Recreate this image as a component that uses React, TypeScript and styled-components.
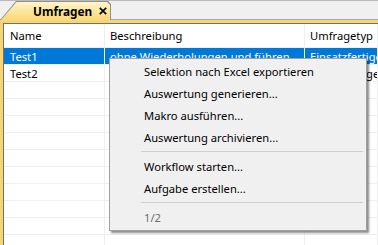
import React from "react";
import styled, { createGlobalStyle } from "styled-components";

const Global = createGlobalStyle`
  html, body { margin: 0; padding: 0; background: #f0f0f0; }
  body { width: 378px; height: 245px; overflow: hidden; font-family: "Noto Sans", "Open Sans", sans-serif; }
`;

const Window = styled.div`
  position: relative;
  width: 378px;
  height: 245px;
  display: flex;
  flex-direction: column;
  background: #f0f0f0;
  overflow: hidden;
`;

const TabStrip = styled.div`
  height: 22px;
  display: flex;
  align-items: flex-end;
  border-top: 1px solid #b9b9b9;
  box-sizing: border-box;
  background: #f0f0f0;
  border-bottom: 1px solid #a8a8a8;
`;

const TabOuter = styled.div`
  width: 111px;
  height: 19px;
  margin-bottom: -1px;
  background: #8f8f8f;
  clip-path: polygon(0 100%, 16px 0, 108px 0, 111px 3px, 111px 100%);
  display: flex;
`;

const TabInner = styled.div`
  flex: 1;
  margin: 1px 1px 0 1px;
  background: linear-gradient(#fff6cf, #fde7a0 45%, #fbd97a);
  clip-path: polygon(0 100%, 15.5px 0, 106px 0, 109px 3px, 109px 100%);
  display: flex;
  align-items: center;
  padding-left: 32px;
  gap: 7px;
`;

const TabLabel = styled.span`
  font-family: "Noto Sans", sans-serif;
  font-weight: 700;
  font-size: 11.8px;
  color: #000;
`;

const Frame = styled.div`
  flex: 1;
  display: flex;
  border-top: 3px solid #f8d56f;
  border-left: 3px solid #f8d56f;
  background: #f8d56f;
`;

const List = styled.div`
  flex: 1;
  background: #fff;
  border-top: 1px solid #6f6f84;
  border-left: 1px solid #6f6f84;
  display: flex;
  flex-direction: column;
  font-family: "Noto Sans", sans-serif;
  font-size: 11.2px;
`;

const GridRow = styled.div<{ $h: number; $selected?: boolean }>`
  display: grid;
  grid-template-columns: 101px 200px 1fr;
  height: ${(p) => p.$h}px;
  box-sizing: border-box;
  border-bottom: 1px solid #efefef;
  background: ${(p) => (p.$selected ? "#0078d7" : "#fff")};
  color: ${(p) => (p.$selected ? "#fff" : "#000")};
`;

const Cell = styled.div<{ $pad?: number }>`
  display: flex;
  align-items: center;
  padding-left: ${(p) => p.$pad ?? 6}px;
  border-right: 1px solid #efefef;
  white-space: nowrap;
  overflow: hidden;
  box-sizing: border-box;
`;

const Menu = styled.div`
  position: absolute;
  left: 109px;
  top: 58px;
  width: 258px;
  height: 173px;
  box-sizing: border-box;
  background: #f0f0f0;
  border: 1px solid #a0a0a0;
  box-shadow: 2px 2px 2px rgba(0, 0, 0, 0.45);
  padding: 2px 1px 2px 1px;
  display: flex;
  flex-direction: column;
  font-family: "Noto Sans", sans-serif;
  font-size: 11.2px;
`;

const Item = styled.div<{ $disabled?: boolean }>`
  height: 22px;
  display: flex;
  align-items: center;
  padding-left: 33px;
  color: ${(p) => (p.$disabled ? "#6d6d6d" : "#000")};
  white-space: nowrap;
`;

const Separator = styled.div`
  height: 7px;
  display: flex;
  align-items: center;
  padding: 0 2px 0 30px;
  &::after {
    content: "";
    flex: 1;
    height: 1px;
    background: #d0d0d0;
  }
`;

const CloseIcon = () => (
  <svg width="8" height="8" viewBox="0 0 8 8">
    <path d="M0.8 0.8 L7.2 7.2 M7.2 0.8 L0.8 7.2" stroke="#000" strokeWidth="1.7" />
  </svg>
);

const rows = [
  { name: "Test1", desc: "ohne Wiederholungen und führen", type: "Einsatzfertige", selected: true },
  { name: "Test2", desc: "mit Wiederholung", type: "Regelmäßige" },
  ...Array.from({ length: 10 }, () => ({ name: "", desc: "", type: "" })),
];

export default function App() {
  return (
    <Window>
      <Global />
      <TabStrip>
        <TabOuter>
          <TabInner>
            <TabLabel>Umfragen</TabLabel>
            <CloseIcon />
          </TabInner>
        </TabOuter>
      </TabStrip>
      <Frame>
        <List>
          <GridRow $h={24}>
            <Cell $pad={6}>Name</Cell>
            <Cell $pad={5}>Beschreibung</Cell>
            <Cell $pad={5}>Umfragetyp</Cell>
          </GridRow>
          {rows.map((r, i) => (
            <GridRow key={i} $h={17} $selected={r.selected}>
              <Cell $pad={6}>{r.name}</Cell>
              <Cell $pad={5}>{r.desc}</Cell>
              <Cell $pad={5}>{r.type}</Cell>
            </GridRow>
          ))}
        </List>
      </Frame>
      <Menu>
        <Item>Selektion nach Excel exportieren</Item>
        <Item>Auswertung generieren...</Item>
        <Item>Makro ausführen...</Item>
        <Item>Auswertung archivieren...</Item>
        <Separator />
        <Item>Workflow starten...</Item>
        <Item>Aufgabe erstellen...</Item>
        <Separator />
        <Item $disabled>1/2</Item>
      </Menu>
    </Window>
  );
}
